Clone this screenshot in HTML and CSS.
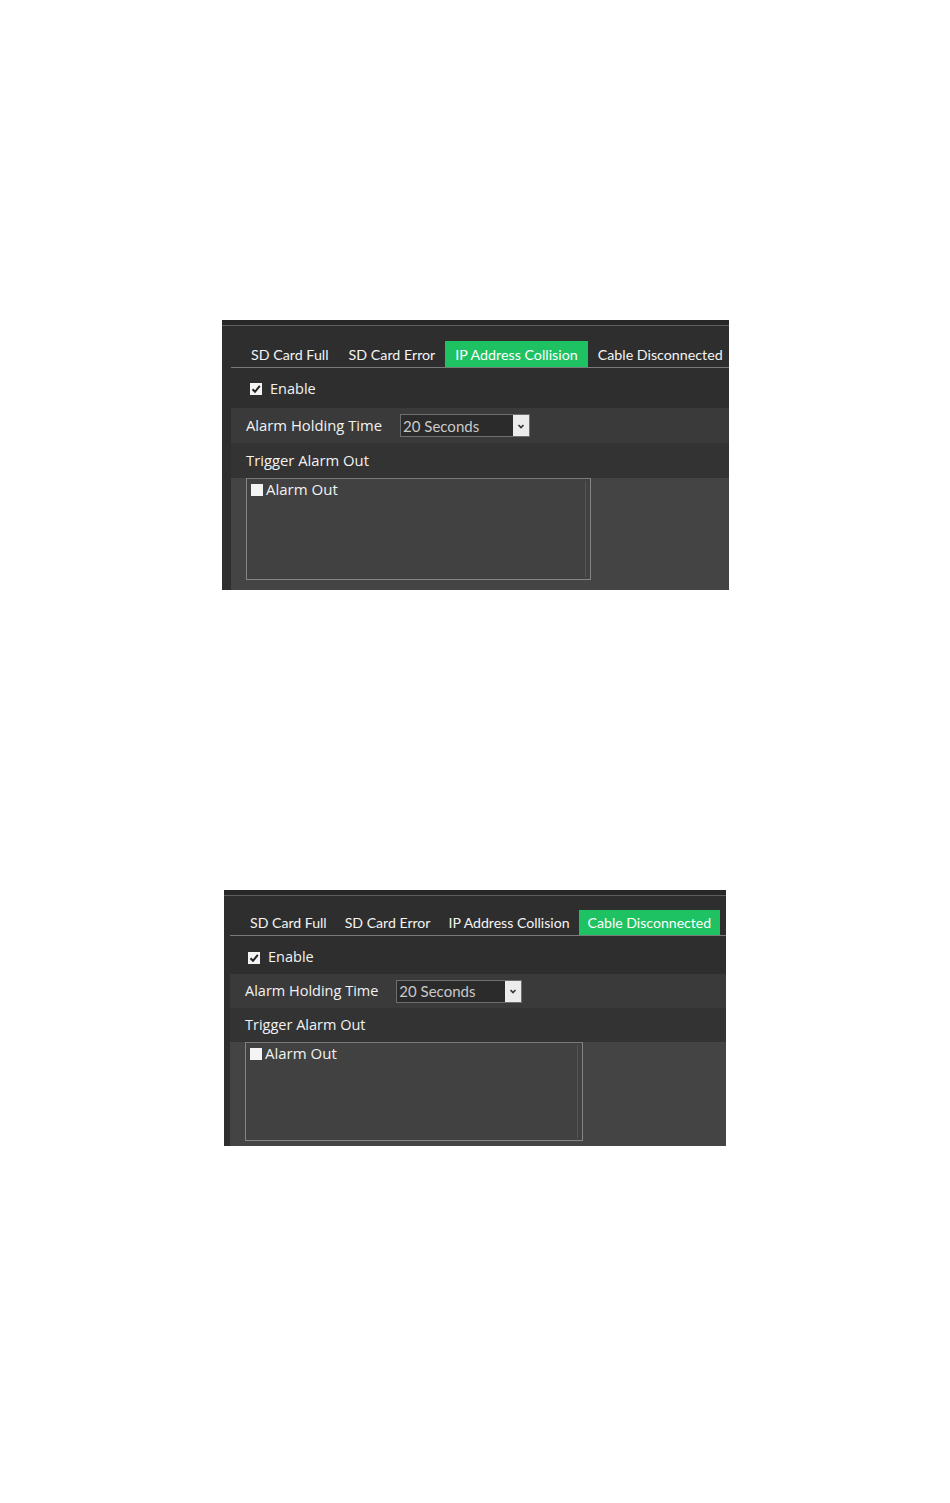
FILE: index.html
```html
<!DOCTYPE html>
<html>
<head>
<meta charset="utf-8">
<link rel="stylesheet" href="styles.css">
</head>
<body>
<div class="page">
  <section class="panel panel-a">
    <div class="topbar"></div>
    <div class="inner">
      <div class="tabs">
        <span class="tab">SD Card Full</span>
        <span class="tab">SD Card Error</span>
        <span class="tab active">IP Address Collision</span>
        <span class="tab">Cable Disconnected</span>
      </div>
      <div class="enable-row">
        <span class="cb checked"><svg viewBox="0 0 12 12"><path d="M2.5 6.2 L5 8.8 L9.8 2.8" fill="none" stroke="#222" stroke-width="2"/></svg></span>
        <span class="lbl">Enable</span>
      </div>
      <div class="row row-hold">
        <span class="lbl">Alarm Holding Time</span>
        <div class="select">
          <span class="sel-text">20 Seconds</span>
          <span class="sel-btn"><svg viewBox="0 0 10 10"><path d="M2.5 4 L5 6.5 L7.5 4" fill="none" stroke="#333" stroke-width="1.6"/></svg></span>
        </div>
      </div>
      <div class="row row-trigger"><span class="lbl">Trigger Alarm Out</span></div>
      <div class="box-area">
        <div class="listbox">
          <div class="list-item"><span class="cb"></span><span class="lbl">Alarm Out</span></div>
          <div class="scroll-line"></div>
        </div>
      </div>
    </div>
  </section>

  <section class="panel panel-b">
    <div class="topbar"></div>
    <div class="inner">
      <div class="tabs">
        <span class="tab">SD Card Full</span>
        <span class="tab">SD Card Error</span>
        <span class="tab">IP Address Collision</span>
        <span class="tab active">Cable Disconnected</span>
      </div>
      <div class="enable-row">
        <span class="cb checked"><svg viewBox="0 0 12 12"><path d="M2.5 6.2 L5 8.8 L9.8 2.8" fill="none" stroke="#222" stroke-width="2"/></svg></span>
        <span class="lbl">Enable</span>
      </div>
      <div class="row row-hold">
        <span class="lbl">Alarm Holding Time</span>
        <div class="select">
          <span class="sel-text">20 Seconds</span>
          <span class="sel-btn"><svg viewBox="0 0 10 10"><path d="M2.5 4 L5 6.5 L7.5 4" fill="none" stroke="#333" stroke-width="1.6"/></svg></span>
        </div>
      </div>
      <div class="row row-trigger"><span class="lbl">Trigger Alarm Out</span></div>
      <div class="box-area">
        <div class="listbox">
          <div class="list-item"><span class="cb"></span><span class="lbl">Alarm Out</span></div>
          <div class="scroll-line"></div>
        </div>
      </div>
    </div>
  </section>
</div>
</body>
</html>
```

FILE: styles.css
```css
* { box-sizing: border-box; }
html, body { margin: 0; padding: 0; background: #ffffff; }
body { width: 950px; height: 1503px; overflow: hidden; font-family: "Open Sans", "Liberation Sans", sans-serif; }

.page { display: flex; flex-direction: column; }

.panel {
  background: #2e2e2e;
  display: flex;
  flex-direction: column;
  color: #f2f2f2;
}
.panel-a { margin: 320px 0 0 222px; width: 507px; height: 270px; }
.panel-b { margin: 300px 0 0 224px; width: 502px; height: 256px; }

.topbar {
  height: 6px;
  background: #282828;
  border-bottom: 1px solid #5e5e5e;
  flex: none;
}

.inner {
  flex: 1;
  display: flex;
  flex-direction: column;
  padding-left: 9px;
}
.panel-b .inner { padding-left: 6px; }

.tabs {
  display: flex;
  align-items: stretch;
  border-bottom: 1px solid #7a7a7a;
  margin-top: 15px;
  padding-left: 10px;
  height: 27px;
}
.panel-b .tabs { margin-top: 14px; height: 26px; padding-left: 11px; }

.tab {
  font-family: Lato, "Open Sans", sans-serif;
  font-size: 14.25px;
  padding: 0 10px;
  padding-top: 1px;
  display: flex;
  align-items: center;
  color: #f4f4f4;
  white-space: nowrap;
}
.panel-b .tab { padding: 0 9px; font-size: 14.1px; }
.tab.active { background: #1ec262; color: #ffffff; }

.enable-row {
  display: flex;
  align-items: center;
  height: 40px;
  padding-left: 19px;
  padding-top: 2px;
  gap: 8px;
}
.panel-b .enable-row { height: 38px; padding-left: 18px; padding-top: 5px; }

.cb {
  width: 12px;
  height: 12px;
  background: #f4f4f4;
  display: inline-flex;
  flex: none;
}
.cb svg { width: 12px; height: 12px; }

.lbl { font-size: 14.5px; line-height: 1; white-space: nowrap; }
.panel-a .row .lbl { font-size: 14.8px; }

.row {
  display: flex;
  align-items: center;
  padding-left: 15px;
}
.row-hold { height: 35px; background: #3a3a3a; }
.row-trigger { height: 35px; background: #333333; }
.panel-b .row-hold, .panel-b .row-trigger { height: 34px; }

.select {
  margin-left: 18px;
  width: 130px;
  height: 23px;
  border: 1px solid #6e6e6e;
  background: #2b2b2b;
  display: flex;
  align-items: center;
}
.panel-b .select { margin-left: 18px; width: 126px; }
.sel-text {
  flex: 1;
  font-family: Lato, "Open Sans", sans-serif;
  font-size: 15px;
  color: #c9c9c9;
  padding-left: 2px;
}
.sel-btn {
  width: 16px;
  height: 21px;
  background: #ececec;
  display: flex;
  align-items: center;
  justify-content: center;
  flex: none;
}
.sel-btn svg { width: 10px; height: 10px; }

.box-area {
  flex: 1;
  background: #444444;
  padding-left: 15px;
}

.listbox {
  width: 345px;
  height: 102px;
  border: 1px solid #858585;
  border-top-color: #7a7a7a;
  background: #414141;
  display: flex;
  position: relative;
}
.panel-b .listbox { width: 338px; height: 99px; }

.list-item {
  display: flex;
  align-items: center;
  gap: 3px;
  padding: 1px 0 0 4px;
  height: 20px;
}
.list-item .lbl { font-size: 15px; }

.scroll-line {
  position: absolute;
  right: 4px;
  top: 2px;
  bottom: 2px;
  width: 1px;
  background: #555;
}
```
